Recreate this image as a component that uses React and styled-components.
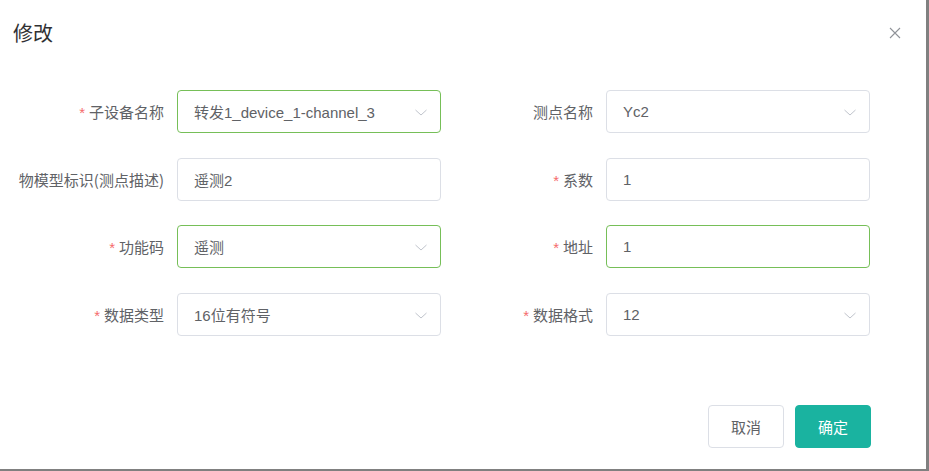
import React from 'react'
import styled, { createGlobalStyle } from 'styled-components';

const Global = createGlobalStyle`
body{
  margin : 0;
  background : #808080;
  font-family : "Liberation Sans", "Noto Sans CJK SC", sans-serif;
}
`;

const Dialog = styled.div`
display : flex;
flex-direction : column;
width : 926px;
height : 469px;
background : #FFFFFF;
box-sizing : border-box;
`;

const Header = styled.div`
display : flex;
flex-direction : row;
justify-content : space-between;
align-items : center;
padding : 21px 24px 0 13px;
height : 24px;
`;

const Title = styled.div`
font-size : 20px;
line-height : 24px;
color : #303133;
font-family : "Noto Sans CJK SC", sans-serif;
`;

const Close = styled.button`
border : none;
background : none;
padding : 0;
width : 14px;
height : 14px;
display : flex;
cursor : pointer;
`;

const Form = styled.div`
display : grid;
grid-template-columns : 424px 424px;
column-gap : 5px;
row-gap : 24.7px;
margin : 45px 0 0 17px;
`;

const Item = styled.div`
display : flex;
flex-direction : row;
align-items : center;
height : 43px;
`;

const Label = styled.label`
width : 160px;
box-sizing : border-box;
padding-right : 13px;
text-align : right;
font-size : 15px;
color : #606266;
font-family : "Noto Sans CJK SC", sans-serif;
white-space : nowrap;
span{
  color : #F56C6C;
  margin-right : 4px;
  font-family : "Liberation Sans", sans-serif;
}
`;

const Field = styled.div`
display : flex;
flex-direction : row;
align-items : center;
justify-content : space-between;
width : 264px;
height : 43px;
box-sizing : border-box;
border : 1px solid ${p => (p.focus ? '#76BF58' : '#DCDFE6')};
border-radius : 4px;
padding : 0 12px 0 16px;
font-size : 15px;
color : #606266;
`;

const Footer = styled.div`
display : flex;
flex-direction : row;
justify-content : flex-end;
gap : 11px;
margin-top : auto;
padding : 0 55px 21px 0;
`;

const Button = styled.button`
width : 76px;
height : 43px;
border-radius : 4px;
box-sizing : border-box;
font-size : 15px;
font-family : "Noto Sans CJK SC", sans-serif;
border : 1px solid ${p => (p.primary ? '#1AB3A0' : '#DCDFE6')};
background : ${p => (p.primary ? '#1AB3A0' : '#FFFFFF')};
color : ${p => (p.primary ? '#FFFFFF' : '#606266')};
cursor : pointer;
`;

const Arrow = () => (
  <svg width="14" height="14" viewBox="0 0 14 14">
    <polyline points="1.5,5 7,10 12.5,5" fill="none" stroke="#C0C4CC" strokeWidth="1" />
  </svg>
);

const rows = [
  { label: '子设备名称', req: true, value: '转发1_device_1-channel_3', select: true, focus: true },
  { label: '测点名称', req: false, value: 'Yc2', select: true },
  { label: '物模型标识(测点描述)', req: false, value: '遥测2' },
  { label: '系数', req: true, value: '1' },
  { label: '功能码', req: true, value: '遥测', select: true, focus: true },
  { label: '地址', req: true, value: '1', focus: true },
  { label: '数据类型', req: true, value: '16位有符号', select: true },
  { label: '数据格式', req: true, value: '12', select: true },
];

export default function App() {
  return (
    <>
      <Global />
      <Dialog>
        <Header>
          <Title>修改</Title>
          <Close aria-label="close">
            <svg width="14" height="14" viewBox="0 0 14 14">
              <path d="M2 2 L12 12 M12 2 L2 12" stroke="#909399" strokeWidth="1.1" />
            </svg>
          </Close>
        </Header>
        <Form>
          {rows.map(r => (
            <Item key={r.label}>
              <Label>{r.req && <span>*</span>}{r.label}</Label>
              <Field focus={r.focus ? 1 : 0}>
                {r.value}
                {r.select && <Arrow />}
              </Field>
            </Item>
          ))}
        </Form>
        <Footer>
          <Button>取消</Button>
          <Button primary={1}>确定</Button>
        </Footer>
      </Dialog>
    </>
  )
}
